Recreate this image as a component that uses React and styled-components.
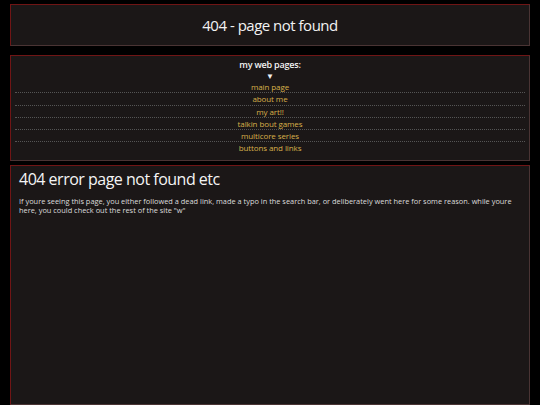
import React from 'react'
import styled, { createGlobalStyle } from "styled-components";

const GlobalStyle = createGlobalStyle`
  html, body {
    margin: 0;
    padding: 0;
    background: #000;
  }
  body {
    font-family: "Open Sans", "Noto Sans", sans-serif;
    color: #eee;
  }
`

const Page = styled.div`
  display: flex;
  flex-direction: column;
  padding: 4px 10px 0;
  height: 405px;
  overflow: hidden;
  box-sizing: border-box;
`;

const Panel = styled.div`
  box-sizing: border-box;
  background: #1b1717;
  border: 1px solid #4a3434;
  border-top-color: #701515;
  border-left-color: #701515;
  margin-bottom: ${p => p.gap || 0}px;
  flex: ${p => (p.grow ? 1 : 'none')};
`;

const Header = styled(Panel)`
  height: 42px;
  display: flex;
  align-items: center;
  justify-content: center;
`;

const Title = styled.h1`
  margin: 0;
  font-size: 15px;
  font-weight: 400;
  color: #f2f2f2;
  letter-spacing: -0.5px;
`;

const Nav = styled(Panel)`
  height: 106px;
  padding: 3px 4px 4px;
  text-align: center;
`;

const NavTitle = styled.div`
  font-size: 9px;
  font-weight: 600;
  color: #f2f2f2;
  line-height: 12px;
  letter-spacing: -0.2px;
`;

const Arrow = styled.div`
  font-size: 8px;
  line-height: 10px;
  color: #f2f2f2;
`;

const NavList = styled.ul`
  list-style: none;
  margin: 0;
  padding: 0;
`;

const NavItem = styled.li`
  font-size: 8px;
  line-height: 11.25px;
  border-bottom: 1px dotted #555;
  &:last-child {
    border-bottom: none;
  }
  a {
    color: #d8b04a;
    text-decoration: none;
    letter-spacing: -0.1px;
  }
`;

const Content = styled(Panel)`
  padding: 3px 8px;
`;

const Heading = styled.h2`
  margin: 0 0 8px;
  font-size: 16px;
  font-weight: 400;
  color: #f4f4f4;
  line-height: 20px;
  letter-spacing: -0.5px;
`;

const Text = styled.p`
  margin: 0;
  font-size: 7.4px;
  line-height: 9px;
  color: #dcdcdc;
`;

const pages = ['main page', 'about me', 'my art!!', 'talkin bout games', 'multicore series', 'buttons and links']

const App = () => {
  return (
    <>
      <GlobalStyle />
      <Page>
        <Header gap={9}>
          <Title>404 - page not found</Title>
        </Header>
        <Nav gap={4}>
          <NavTitle>my web pages:</NavTitle>
          <Arrow>▼</Arrow>
          <NavList>
            {pages.map(p => (
              <NavItem key={p}><a href="#">{p}</a></NavItem>
            ))}
          </NavList>
        </Nav>
        <Content grow>
          <Heading>404 error page not found etc</Heading>
          <Text>
            If youre seeing this page, you either followed a dead link, made a typo in the search bar, or deliberately went here for some reason. while youre here, you could check out the rest of the site "w"
          </Text>
        </Content>
      </Page>
    </>
  )
}

export default App
